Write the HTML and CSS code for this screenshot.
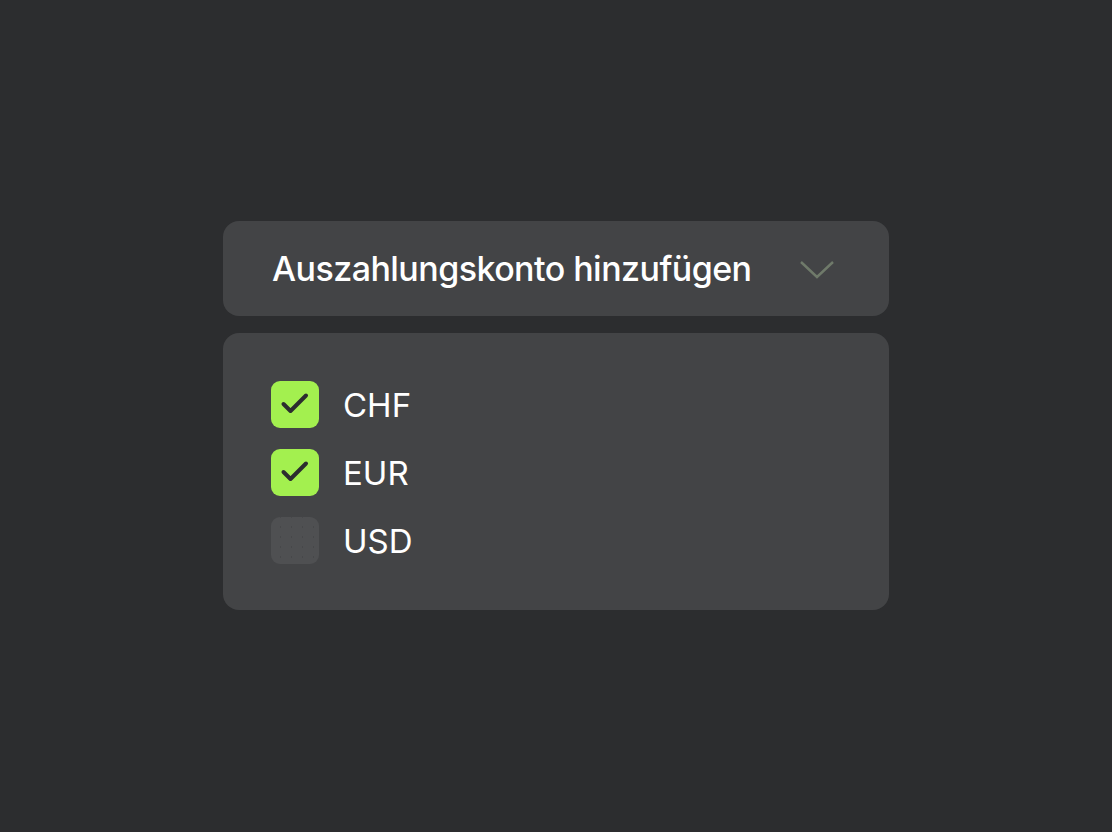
FILE: index.html
```html
<!DOCTYPE html>
<html lang="de">
<head>
<meta charset="utf-8">
<link rel="stylesheet" href="styles.css">
</head>
<body>
<main class="stage">
  <div class="panel">
    <button class="header">
      <span class="title">Auszahlungskonto hinzufügen</span>
      <svg class="chev" width="36" height="20" viewBox="0 0 36 20"><path d="M2 2 L18 17 L34 2" fill="none" stroke="#6f7a6a" stroke-width="2.4"/></svg>
    </button>
    <div class="list">
      <label class="row"><span class="box on"><svg width="48" height="47" viewBox="0 0 48 47"><path d="M12.5 23 L19.5 30 L35 14.5" fill="none" stroke="#2c2d2f" stroke-width="4" stroke-linecap="round" stroke-linejoin="round"/></svg></span><span class="cur">CHF</span></label>
      <label class="row"><span class="box on"><svg width="48" height="47" viewBox="0 0 48 47"><path d="M12.5 23 L19.5 30 L35 14.5" fill="none" stroke="#2c2d2f" stroke-width="4" stroke-linecap="round" stroke-linejoin="round"/></svg></span><span class="cur">EUR</span></label>
      <label class="row"><span class="box off"></span><span class="cur">USD</span></label>
    </div>
  </div>
</main>
</body>
</html>
```
FILE: styles.css
```css
html, body { margin: 0; padding: 0; }
body { background: #2c2d2f; width: 1112px; height: 832px; font-family: Inter, "Noto Sans", sans-serif; color: #fff; }
.stage { display: flex; justify-content: center; padding-top: 221px; }
.panel { width: 666px; display: flex; flex-direction: column; gap: 17px; }
.header { display: flex; align-items: center; justify-content: space-between; height: 95px; box-sizing: border-box; padding: 0 54px 0 49px; background: #434446; border: 0; border-radius: 16px; color: #fff; font: inherit; }
.title { font-size: 34px; font-weight: 500; letter-spacing: -0.55px; }
.chev { margin-top: 2px; }
.list { background: #434446; border-radius: 16px; padding: 48px 48px 46px; display: flex; flex-direction: column; gap: 21px; }
.row { display: flex; align-items: center; gap: 24px; height: 47px; }
.box { width: 48px; height: 47px; border-radius: 9px; display: flex; align-items: center; justify-content: center; }
.box.on { background: #a3f04f; }
.box.off { background-color: #4f5052; background-image: radial-gradient(circle, #47484a 0.7px, transparent 1.1px); background-size: 11px 10px; background-position: 4px 5px; }
.cur { font-size: 33px; font-weight: 400; }
```
